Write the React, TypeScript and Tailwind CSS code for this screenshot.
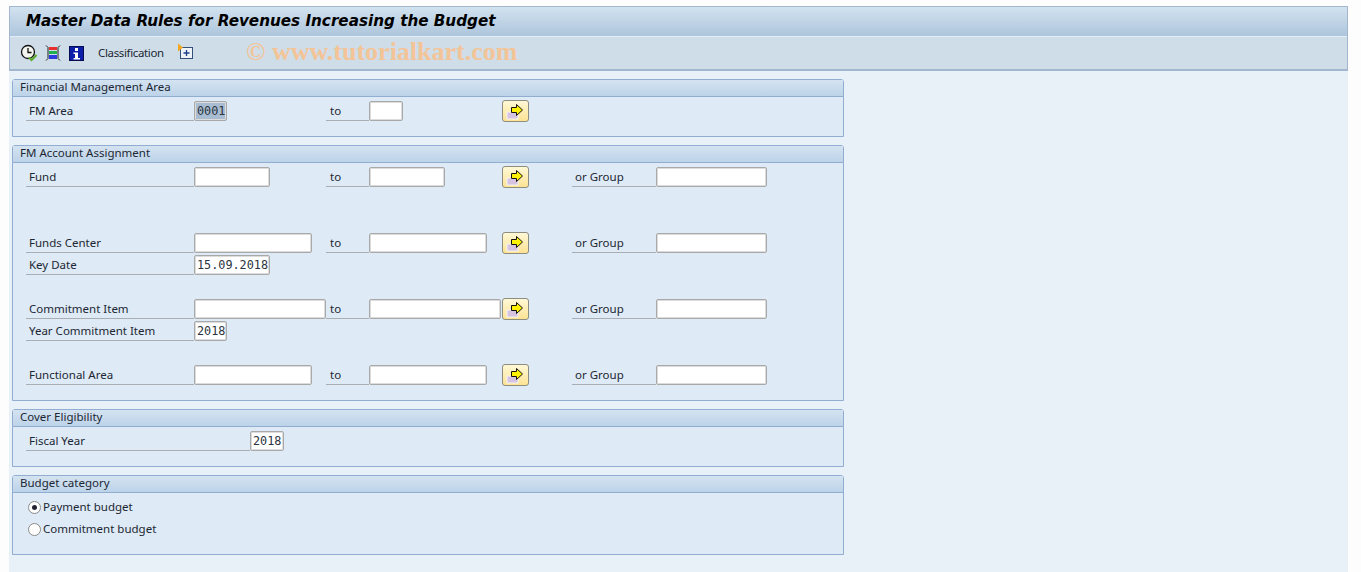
import type { ReactNode } from 'react'

const labelFont = "font-['Noto_Sans','Open_Sans',sans-serif] text-[11.500px] text-[#1c2733]"

function Field({ w, value, selected }: { w: string; value?: string; selected?: boolean }) {
  return (
    <div className={`${w} h-5 shrink-0 flex items-center pl-[2px] pt-[1px] border border-[#a9a9a9] shadow-[inset_0_0_0_1px_#dcdcdc] rounded-[2px] font-['DejaVu_Sans_Mono',monospace] text-[11.800px] text-[#2a3440] ${selected ? 'bg-[#a9bdd2]' : 'bg-white'}`}>
      {value}
    </div>
  )
}

function Label({ w, to, children }: { w: string; to?: boolean; children: ReactNode }) {
  return (
    <div className={`${w} h-5 shrink-0 border-b border-[#a8aeb3] leading-[20px] ${to ? 'pl-[4px]' : 'pl-[3px]'} ${labelFont}`}>
      {children}
    </div>
  )
}

function ArrowButton() {
  return (
    <div className="w-[27px] h-[22px] shrink-0 -mt-[1px] flex items-center justify-center rounded-[3px] border border-[#8d8d80] bg-gradient-to-b from-[#fff8d6] to-[#fde392]">
      <svg width="19" height="17" viewBox="0 0 19 17">
        <rect x="1" y="9" width="11" height="7" fill="#d6c3e2" stroke="#f5f5f5" />
        <path d="M5.500 4.500h5v-3l6 5.500-6 5.500v-3h-5z" fill="#fff200" stroke="#111" strokeWidth="1" />
      </svg>
    </div>
  )
}

function Row({ className, children }: { className?: string; children: ReactNode }) {
  return <div className={`flex h-5 ${className ?? ''}`}>{children}</div>
}

function OrGroup() {
  return (
    <>
      <Label w="w-[84px]">or Group</Label>
      <Field w="w-[111px]" />
    </>
  )
}

function Box({ title, h, children }: { title: string; h: string; children: ReactNode }) {
  return (
    <section className={`w-[832px] ${h} border border-[#91add0] rounded-t-[3px] bg-[#deeaf5]`}>
      <div className={`h-[17px] pl-[7px] border-b border-[#91add0] bg-gradient-to-b from-[#d4e3f1] to-[#bcd3e9] leading-[14px] ${labelFont}`}>
        {title}
      </div>
      <div className="pl-[13px]">{children}</div>
    </section>
  )
}

function TbIcons() {
  return (
    <>
      <svg width="18" height="18" viewBox="0 0 18 18" className="ml-[10px]">
        <circle cx="8" cy="8" r="6.500" fill="#f4f4f0" stroke="#111" strokeWidth="1.300" />
        <path d="M8 4v4.500h3.500" fill="none" stroke="#111" strokeWidth="1.300" />
        <path d="M9 13.500l2.500 2.500 5-5" fill="none" stroke="#5ea82f" strokeWidth="2.200" />
      </svg>
      <svg width="16" height="16" viewBox="0 0 16 16" className="ml-[7px]">
        <rect x="4" y="2" width="8" height="3" fill="#e83030" />
        <rect x="4" y="6" width="8" height="3" fill="#20b050" />
        <rect x="4" y="10" width="8" height="4" fill="#2a3ae0" />
        <path d="M1 .5 3 2.500v11L1 15.500M15 .5 13 2.500v11l2 2" fill="none" stroke="#222" />
      </svg>
      <div className="w-[15px] h-[15px] ml-[8px] bg-[#0b1fa8] border border-[#0a0a50] flex justify-center">
        <svg width="9" height="13" viewBox="0 0 9 13">
          <rect x="3" y="1" width="3" height="3" fill="#fff" />
          <path d="M1.500 5.500H6V11H8V12.500H1.500V11H3V7H1.500z" fill="#fff" />
        </svg>
      </div>
      <span className={`ml-[14px] w-[65px] tracking-[-0.35px] whitespace-nowrap ${labelFont}`}>Classification</span>
      <svg width="17" height="17" viewBox="0 0 17 17" className="ml-[14px] -mt-[3px]">
        <rect x="3.500" y="4.500" width="12" height="11" fill="#eef3f8" stroke="#33507a" />
        <path d="M1 0.500l5 4-5 4z" fill="#f0a820" />
        <path d="M9.500 7v6M6.500 10h6" stroke="#1d3f86" strokeWidth="1.300" />
      </svg>
    </>
  )
}

export default function App() {
  return (
    <div className="w-[1361px] h-[572px] overflow-hidden bg-[#fdfdfe] pt-[6px]">
      <div className="w-[1339px] ml-[9px] h-[566px] bg-[#e8f0f8]">
        <header className="h-[65px] border border-b-2 border-[#a3b6cf]">
          <div className="h-[30px] pl-[16px] border-b border-[#e4eef7] bg-gradient-to-b from-[#d2e2ef] to-[#adc5dc] leading-[28px] font-['DejaVu_Sans',sans-serif] text-[15.200px] font-bold italic text-black whitespace-nowrap">
            Master Data Rules for Revenues Increasing the Budget
          </div>
          <div className="relative h-[32px] flex items-center bg-[#cfdde8]">
            <TbIcons />
            <span className="absolute left-[236px] top-[1px] font-['Liberation_Serif',serif] font-bold text-[26px] leading-[28px] text-[#f3c497] whitespace-nowrap">
              © www.tutorialkart.com
            </span>
          </div>
        </header>

        <main className="pl-[3px] pt-[8px] flex flex-col gap-[8px]">
          <Box title="Financial Management Area" h="h-[58px]">
            <Row className="mt-[4px]">
              <Label w="w-[168px]">FM Area</Label>
              <Field w="w-[33px]" value="0001" selected />
              <div className="w-[99px] shrink-0" />
              <Label w="w-[43px]" to>to</Label>
              <Field w="w-[34px]" />
              <div className="w-[99px] shrink-0" />
              <ArrowButton />
            </Row>
          </Box>

          <Box title="FM Account Assignment" h="h-[256px]">
            <Row className="mt-[4px]">
              <Label w="w-[168px]">Fund</Label>
              <Field w="w-[76px]" />
              <div className="w-[56px] shrink-0" />
              <Label w="w-[43px]" to>to</Label>
              <Field w="w-[76px]" />
              <div className="w-[57px] shrink-0" />
              <ArrowButton />
              <div className="w-[43px] shrink-0" />
              <OrGroup />
            </Row>
            <Row className="mt-[46px]">
              <Label w="w-[168px]">Funds Center</Label>
              <Field w="w-[118px]" />
              <div className="w-[14px] shrink-0" />
              <Label w="w-[43px]" to>to</Label>
              <Field w="w-[118px]" />
              <div className="w-[15px] shrink-0" />
              <ArrowButton />
              <div className="w-[43px] shrink-0" />
              <OrGroup />
            </Row>
            <Row className="mt-[2px]">
              <Label w="w-[168px]">Key Date</Label>
              <Field w="w-[76px]" value="15.09.2018" />
            </Row>
            <Row className="mt-[24px]">
              <Label w="w-[168px]">Commitment Item</Label>
              <Field w="w-[132px]" />
              <Label w="w-[43px]" to>to</Label>
              <Field w="w-[132px]" />
              <div className="w-[1px] shrink-0" />
              <ArrowButton />
              <div className="w-[43px] shrink-0" />
              <OrGroup />
            </Row>
            <Row className="mt-[2px]">
              <Label w="w-[168px]">Year Commitment Item</Label>
              <Field w="w-[33px]" value="2018" />
            </Row>
            <Row className="mt-[24px]">
              <Label w="w-[168px]">Functional Area</Label>
              <Field w="w-[118px]" />
              <div className="w-[14px] shrink-0" />
              <Label w="w-[43px]" to>to</Label>
              <Field w="w-[118px]" />
              <div className="w-[15px] shrink-0" />
              <ArrowButton />
              <div className="w-[43px] shrink-0" />
              <OrGroup />
            </Row>
          </Box>

          <Box title="Cover Eligibility" h="h-[58px]">
            <Row className="mt-[4px]">
              <Label w="w-[224px]">Fiscal Year</Label>
              <Field w="w-[34px]" value="2018" />
            </Row>
          </Box>

          <Box title="Budget category" h="h-[80px]">
            <div className="pl-[2px] pt-[4px] flex flex-col gap-[2px]">
              <div className="flex h-5 items-center">
                <span className="w-[13px] h-[13px] rounded-full border border-[#8a8a8a] bg-white flex items-center justify-center">
                  <span className="w-[5px] h-[5px] rounded-full bg-[#223]" />
                </span>
                <span className={`ml-[2px] ${labelFont}`}>Payment budget</span>
              </div>
              <div className="flex h-5 items-center">
                <span className="w-[13px] h-[13px] rounded-full border border-[#8a8a8a] bg-white" />
                <span className={`ml-[2px] ${labelFont}`}>Commitment budget</span>
              </div>
            </div>
          </Box>
        </main>
      </div>
    </div>
  )
}
